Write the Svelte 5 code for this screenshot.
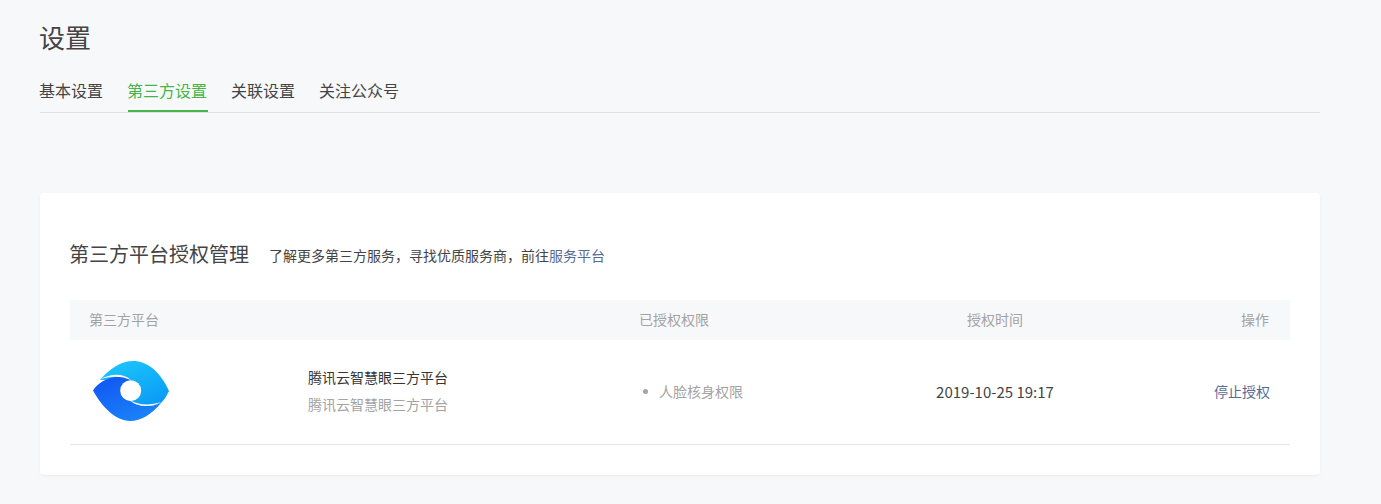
<script>
  const tabs = ['基本设置', '第三方设置', '关联设置', '关注公众号'];
  const active = 1;
</script>

<div class="page">
  <h1>设置</h1>
  <nav class="tabs">
    {#each tabs as tab, i}
      <a class="tab" class:active={i === active} href="#tab">{tab}</a>
    {/each}
  </nav>

  <section class="card">
    <div class="card-head">
      <h2>第三方平台授权管理</h2>
      <p>了解更多第三方服务，寻找优质服务商，前往<a href="#service">服务平台</a></p>
    </div>

    <div class="grid head-row">
      <span class="span-2">第三方平台</span>
      <span>已授权权限</span>
      <span class="center">授权时间</span>
      <span class="right">操作</span>
    </div>

    <div class="grid body-row">
      <div class="logo">
        <svg width="78" height="62" viewBox="0 0 78 62">
          <defs>
            <linearGradient id="top" x1="0.2" y1="0" x2="0.8" y2="1">
              <stop offset="0" stop-color="#1cc6fb" />
              <stop offset="1" stop-color="#0a9af6" />
            </linearGradient>
            <linearGradient id="bottom" x1="0.2" y1="0.1" x2="0.7" y2="1">
              <stop offset="0" stop-color="#125af4" />
              <stop offset="1" stop-color="#1a84f8" />
            </linearGradient>
          </defs>
          <path d="M8 20C18 8 30 1 41 1C55 1 68 11 77 31C74 37 72 40 69 43C59 47 45 47 38 40L38 20Z" fill="url(#top)" />
          <path d="M1 30.500C5 24 13 18.500 25 16.500C30 16 34 17 38 20L38 40C45 47.500 59 47.500 69 43C60 54 49 61 38 61C24 61 10 47 1 30.500Z" fill="url(#bottom)" />
          <path d="M9 19C17 14.500 30 12 39 20C30 16 20 15.500 9 19Z" fill="#fff" />
          <path d="M38 40C46 45.500 59 45.500 69 42C60 47.500 45 47.500 38 40Z" fill="#fff" />
          <circle cx="38.700" cy="30.700" r="10.500" fill="#fff" />
        </svg>
      </div>
      <div class="name">
        <strong>腾讯云智慧眼三方平台</strong>
        <small>腾讯云智慧眼三方平台</small>
      </div>
      <ul><li>人脸核身权限</li></ul>
      <span class="time center">2019-10-25 19:17</span>
      <a class="right stop" href="#stop">停止授权</a>
    </div>
  </section>
</div>

<style>
  :global(body) {
    margin: 0;
    background: #f7f8fa;
    font-family: "Noto Sans CJK SC", "Liberation Sans", sans-serif;
    color: #444;
  }
  .page {
    width: 1280px;
    margin-left: 40px;
    padding-top: 19px;
    height: 485px;
  }
  h1 {
    margin: 0;
    font-size: 26px;
    font-weight: 400;
    line-height: 36px;
    text-indent: -1px;
  }
  .tabs {
    display: flex;
    gap: 24px;
    margin-top: 17px;
    height: 40px;
    border-bottom: 1px solid #e1e1e1;
  }
  .tab {
    height: 40px;
    box-sizing: border-box;
    color: #444;
    font-size: 16px;
    line-height: 36px;
    text-decoration: none;
    text-indent: -1px;
    padding-right: 1px;
  }
  .tab.active {
    color: #44b549;
    border-bottom: 2px solid #44b549;
  }
  .card {
    margin-top: 80px;
    height: 282px;
    box-sizing: border-box;
    padding: 0 30px;
    background: #fff;
    border-radius: 4px;
    box-shadow: 0 1px 2px rgba(150, 150, 150, 0.12);
  }
  .card-head {
    display: flex;
    align-items: center;
    gap: 20px;
    height: 107px;
    padding-top: 15px;
    box-sizing: border-box;
  }
  h2 {
    margin: 0;
    font-size: 20px;
    font-weight: 400;
    line-height: 28px;
    text-indent: -1px;
    color: #444;
  }
  .card-head p {
    margin: 0;
    font-size: 14px;
    line-height: 28px;
    padding-top: 1px;
  }
  .card-head a {
    color: #576b95;
    text-decoration: none;
  }
  .grid {
    display: grid;
    grid-template-columns: 238px 312px 240px 270px 160px;
    align-items: center;
    font-size: 14px;
  }
  .head-row {
    height: 40px;
    padding-bottom: 2px;
    box-sizing: border-box;
    background: #f7f8fa;
    color: #a3a3a3;
  }
  .head-row > span:first-child {
    padding-left: 19px;
  }
  .head-row > span:nth-child(2) {
    padding-left: 19px;
  }
  .span-2 {
    grid-column: span 2;
  }
  .center {
    text-align: center;
  }
  .right {
    text-align: right;
    padding-right: 20px;
  }
  .head-row .right {
    padding-right: 21px;
  }
  .body-row {
    height: 105px;
    padding-bottom: 2px;
    box-sizing: border-box;
    border-bottom: 1px solid #e4e8eb;
  }
  .logo {
    display: flex;
    padding-left: 22px;
  }
  .name {
    display: flex;
    flex-direction: column;
    gap: 7px;
    line-height: 20px;
    padding-bottom: 2px;
  }
  .name strong {
    font-weight: 400;
    font-size: 14px;
    color: #353535;
  }
  .name small {
    font-size: 14px;
    color: #a3a3a3;
  }
  ul {
    margin: 0;
    padding: 0 0 0 23px;
    list-style: none;
    color: #a3a3a3;
  }
  li {
    display: flex;
    align-items: center;
    gap: 11px;
  }
  li::before {
    content: "";
    flex: none;
    width: 5px;
    height: 5px;
    border-radius: 50%;
    background: #a3a3a3;
  }
  .time {
    font-size: 15px;
    color: #444;
  }
  .stop {
    color: #576b95;
    text-decoration: none;
    padding-right: 20px;
  }
</style>
